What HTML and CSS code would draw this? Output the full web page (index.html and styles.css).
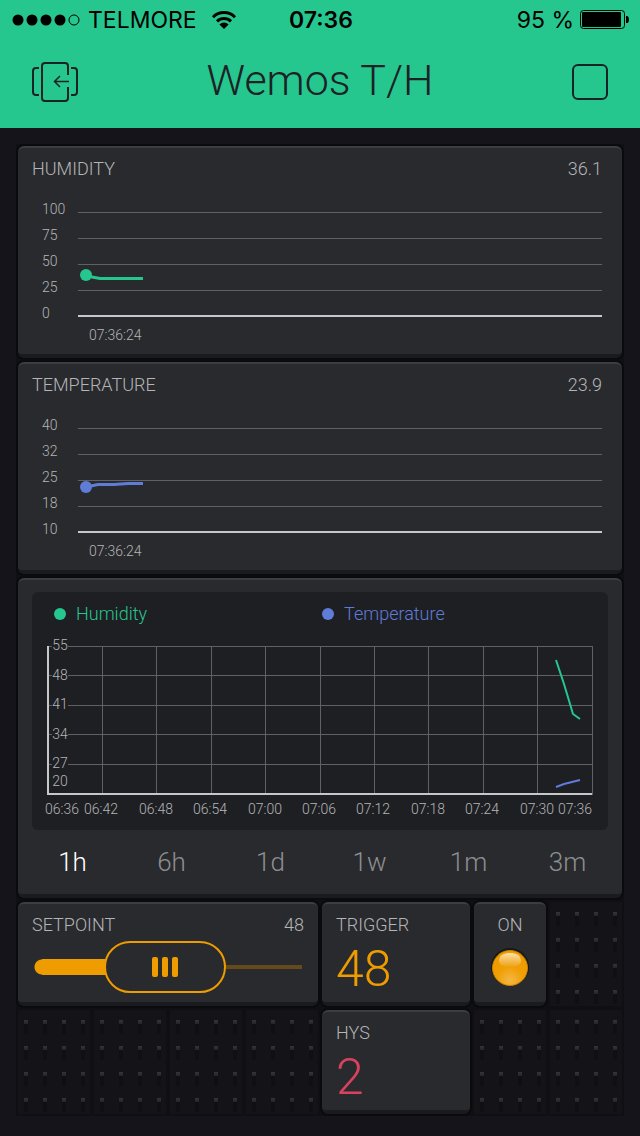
FILE: index.html
```html
<!DOCTYPE html>
<html lang="en">
<head>
    <meta charset="UTF-8">
    <meta name="viewport" content="width=device-width, initial-scale=1.0">
    <title>Wemos T/H</title>
    <link rel="stylesheet" href="styles.css">
</head>
<body>

    <header>
        <div class="status-bar">
            <div class="carrier">
                <svg class="signal" width="68" height="12" viewBox="0 0 68 12" aria-hidden="true">
                    <circle cx="6" cy="6" r="5.5"/>
                    <circle cx="20" cy="6" r="5.5"/>
                    <circle cx="34" cy="6" r="5.5"/>
                    <circle cx="48" cy="6" r="5.5"/>
                    <circle cx="62" cy="6" r="5" fill="none" stroke="#000" stroke-width="1"/>
                </svg>
                <span>TELMORE</span>
                <svg class="wifi" width="26" height="20" viewBox="0 0 26 20" aria-hidden="true">
                    <path d="M2 7.2a15.5 15.5 0 0 1 22 0M6 11.4a10 10 0 0 1 14 0" fill="none" stroke="#000" stroke-width="3"/>
                    <path d="M13 19l-4.6-4.6a6.5 6.5 0 0 1 9.2 0z"/>
                </svg>
            </div>
            <div class="clock">07:36</div>
            <div class="battery">
                <span>95 %</span>
                <svg width="50" height="20" viewBox="0 0 50 20" aria-hidden="true">
                    <rect x="0.5" y="0.5" width="44" height="18" rx="3" fill="none" stroke="#000"/>
                    <rect x="2" y="2" width="39" height="15" rx="1"/>
                    <path d="M46 6h1.5q1.5 1 1.5 3.5t-1.5 3.5H46z"/>
                </svg>
            </div>
        </div>
        <div class="title-bar">
            <button class="icon-button" aria-label="Devices">
                <svg width="46" height="40" viewBox="0 0 46 40" fill="none" stroke="#1d2225" stroke-width="2">
                    <path d="M36 13V4a3 3 0 0 0-3-3H13a3 3 0 0 0-3 3v32a3 3 0 0 0 3 3h20a3 3 0 0 0 3-3V25"/>
                    <path d="M7 6H4a3 3 0 0 0-3 3v21a3 3 0 0 0 3 3h3M39 6h3a3 3 0 0 1 3 3v21a3 3 0 0 1-3 3h-3"/>
                    <path d="M37 19.500H23M28 14l-5.500 5.500L28 25" stroke-width="1.500"/>
                </svg>
            </button>
            <h1>Wemos T/H</h1>
            <button class="icon-button" aria-label="Stop">
                <svg width="36" height="36" viewBox="0 0 36 36" fill="none" stroke="#1d2225" stroke-width="2">
                    <rect x="1" y="1" width="34" height="34" rx="5"/>
                </svg>
            </button>
        </div>
    </header>

    <main class="board">
        <section class="widget graph">
            <div class="widget-head"><h2>Humidity</h2><span>36.1</span></div>
            <div class="chart">
                <div class="scale"><span>100</span><span>75</span><span>50</span><span>25</span><span>0</span></div>
                <svg class="plot" viewBox="0 0 524 130" aria-hidden="true">
                    <path class="grid-line" d="M0 16.500H524M0 42.500H524M0 68.500H524M0 94.500H524"/>
                    <path class="axis" d="M0 120H524"/>
                    <path class="line green" d="M8 79L14 81L22 82.500H65"/>
                    <circle class="green-dot" cx="8" cy="79" r="6"/>
                </svg>
            </div>
            <div class="time">07:36:24</div>
        </section>

        <section class="widget graph">
            <div class="widget-head"><h2>Temperature</h2><span>23.9</span></div>
            <div class="chart">
                <div class="scale"><span>40</span><span>32</span><span>25</span><span>18</span><span>10</span></div>
                <svg class="plot" viewBox="0 0 524 130" aria-hidden="true">
                    <path class="grid-line" d="M0 16.500H524M0 42.500H524M0 68.500H524M0 94.500H524"/>
                    <path class="axis" d="M0 120H524"/>
                    <path class="line blue" d="M8 75L20 72.500H36L50 71.500H65"/>
                    <circle class="blue-dot" cx="8" cy="75" r="6"/>
                </svg>
            </div>
            <div class="time">07:36:24</div>
        </section>

        <section class="widget history">
            <div class="history-chart">
                <div class="legend">
                    <span class="legend-green">Humidity</span>
                    <span class="legend-blue">Temperature</span>
                </div>
                <svg viewBox="0 0 576 204">
                    <path class="grid-line" d="M16 20.500h4M36 20.500H561M16 49.500h4M36 49.500H561M16 79.500h4M36 79.500H561M16 108.500h4M36 108.500H561M16 138.500h4M36 138.500H561"/>
                    <path class="grid-line" d="M70.500 20V168M124.500 20V168M179.500 20V168M233.500 20V168M288.500 20V168M342.500 20V168M396.500 20V168M451.500 20V168M505.500 20V168M560.500 20V169"/>
                    <path class="axis" d="M16 20V168H560"/>
                    <path class="trend green" d="M524 34L532 58L541 88L548 93"/>
                    <path class="trend blue" d="M524 161L532 158L548 154"/>
                    <g class="y-labels">
                        <text x="28" y="24">55</text>
                        <text x="28" y="54">48</text>
                        <text x="28" y="83">41</text>
                        <text x="28" y="113">34</text>
                        <text x="28" y="142">27</text>
                        <text x="28" y="160">20</text>
                    </g>
                    <g class="x-labels">
                        <text x="30" y="188">06:36</text>
                        <text x="69" y="188">06:42</text>
                        <text x="124" y="188">06:48</text>
                        <text x="178" y="188">06:54</text>
                        <text x="233" y="188">07:00</text>
                        <text x="287" y="188">07:06</text>
                        <text x="341" y="188">07:12</text>
                        <text x="396" y="188">07:18</text>
                        <text x="450" y="188">07:24</text>
                        <text x="505" y="188">07:30</text>
                        <text x="543" y="188">07:36</text>
                    </g>
                </svg>
            </div>
            <div class="ranges">
                <button class="active">1h</button>
                <button>6h</button>
                <button>1d</button>
                <button>1w</button>
                <button>1m</button>
                <button>3m</button>
            </div>
        </section>

        <section class="widget setpoint">
            <div class="widget-head"><label for="setpoint">Setpoint</label><span>48</span></div>
            <input type="range" id="setpoint" min="0" max="100" value="48">
        </section>

        <section class="widget value">
            <div class="widget-head"><h2>Trigger</h2></div>
            <div class="number orange">48</div>
        </section>

        <section class="widget led">
            <h2>On</h2>
            <svg width="40" height="40" viewBox="0 0 40 40" aria-hidden="true">
                <defs>
                    <radialGradient id="glow" cx="50%" cy="85%" r="65%">
                        <stop offset="0" stop-color="#f5b743"/>
                        <stop offset="0.600" stop-color="#ef9f04"/>
                        <stop offset="1" stop-color="#ee9c00"/>
                    </radialGradient>
                    <linearGradient id="shine" x1="0" y1="0" x2="0" y2="1">
                        <stop offset="0" stop-color="#fbe0a8"/>
                        <stop offset="1" stop-color="#f0a010"/>
                    </linearGradient>
                </defs>
                <circle cx="20" cy="19" r="19" fill="#17181a"/>
                <circle cx="20" cy="20" r="17.500" fill="url(#glow)" stroke="#c98200"/>
                <path d="M9 13C9 7 14 5 20 5s11 2 11 8c0 4-5 6-11 6S9 17 9 13z" fill="url(#shine)"/>
            </svg>
        </section>

        <div class="slot"></div>
        <div class="slot"></div>
        <div class="slot"></div>
        <div class="slot"></div>
        <div class="slot"></div>

        <section class="widget value">
            <div class="widget-head"><h2>Hys</h2></div>
            <div class="number red">2</div>
        </section>

        <div class="slot"></div>
        <div class="slot"></div>
    </main>

</body>
</html>
```

FILE: styles.css
```css
* {
    box-sizing: border-box;
}
body {
    margin: 0;
    background-color: #15141a;
    color: #b4b5b6;
    font-family: Roboto, sans-serif;
    font-weight: 300;
}
h1, h2 {
    margin: 0;
    font-weight: 300;
}
button {
    padding: 0;
    border: none;
    background: none;
    color: inherit;
    font: inherit;
    cursor: pointer;
}
svg {
    display: block;
}

/* header */
header {
    height: 128px;
    background-color: #26c68f;
}
.status-bar {
    display: grid;
    grid-template-columns: 1fr auto 1fr;
    align-items: center;
    height: 40px;
    padding: 0 10px 0 12px;
    color: #000;
    font-family: Inter, sans-serif;
    font-size: 23px;
    font-weight: 400;
}
.carrier, .battery {
    display: flex;
    align-items: center;
    gap: 8px;
}
.carrier .wifi {
    margin-left: 6px;
}
.battery {
    justify-content: flex-end;
    gap: 6px;
}
.clock {
    font-weight: 600;
}
.title-bar {
    display: grid;
    grid-template-columns: 1fr auto 1fr;
    align-items: center;
    height: 84px;
    padding: 0 32px;
}
.title-bar h1 {
    color: #1d2225;
    font-size: 43px;
    line-height: 52px;
    padding-bottom: 4px;
}
.icon-button:last-child {
    justify-self: end;
}
.icon-button:first-child {
    justify-self: start;
}

/* widget board */
.board {
    display: grid;
    grid-template-columns: repeat(8, 1fr);
    grid-auto-rows: minmax(104px, auto);
    gap: 4px;
    margin: 16px 16px 20px;
    padding: 2px;
    background-color: #100f13;
}
.widget {
    border-top: 2px solid #3c3d40;
    border-bottom: 4px solid #1a1b1e;
    border-radius: 6px;
    background-color: #292a2e;
    box-shadow: 0 0 0 2px #0b0b0d;
    min-width: 0;
}
.widget-head {
    display: flex;
    justify-content: space-between;
    padding: 9px 14px 0;
    font-size: 18px;
    line-height: 24px;
}
.widget h2, .widget label {
    font-size: 18px;
    line-height: 24px;
    text-transform: uppercase;
}
.slot {
    background-color: #141318;
    background-image:
        linear-gradient(to right, transparent 4px, #141318 4px),
        linear-gradient(#343537, #242528 4px, #101014 4px, #101014 14px, transparent 14px);
    background-size: 19px 26px;
    background-position: 6px 10px;
}

/* live graphs */
.graph {
    grid-column: span 8;
    grid-row: span 2;
}
.graph .widget-head {
    padding-right: 20px;
}
.chart {
    display: flex;
    padding: 15px 20px 0 24px;
}
.scale {
    display: flex;
    flex-direction: column;
    justify-content: space-around;
    width: 36px;
    font-size: 14px;
    line-height: 26px;
}
.plot {
    flex: 1;
    min-width: 0;
}
.time {
    padding-left: 71px;
    font-size: 14px;
    line-height: 18px;
}
.grid-line {
    fill: none;
    stroke: #606164;
    stroke-width: 1;
}
.axis {
    fill: none;
    stroke: #c6c7c8;
    stroke-width: 2;
}
.line {
    fill: none;
    stroke-width: 3;
}
.trend {
    fill: none;
    stroke-width: 2;
}
.green {
    stroke: #26c68f;
}
.blue {
    stroke: #5f7cd8;
}
.green-dot {
    fill: #26c68f;
}
.blue-dot {
    fill: #5f7cd8;
}

/* history */
.history {
    grid-column: span 8;
    grid-row: span 3;
    padding-top: 12px;
}
.history-chart {
    margin: 0 14px;
    padding-top: 10px;
    border-radius: 6px;
    background-color: #1e1f23;
}
.history-chart text {
    fill: #b4b5b6;
    font-size: 14px;
    text-anchor: middle;
}
.legend {
    display: grid;
    grid-template-columns: 1fr 1fr;
    padding: 0 18px 0 22px;
    font-size: 18px;
    line-height: 24px;
}
.legend span {
    display: flex;
    align-items: center;
    gap: 10px;
}
.legend span::before {
    content: "";
    width: 12px;
    height: 12px;
    border-radius: 50%;
    background-color: currentColor;
}
.legend-green {
    color: #26c68f;
}
.legend-blue {
    color: #5f7cd8;
}
.ranges {
    display: grid;
    grid-template-columns: repeat(6, 1fr);
    padding: 16px 5px 0;
    color: #8d8e90;
    font-size: 26px;
    line-height: 32px;
}
.ranges .active {
    color: #fff;
}

/* setpoint slider */
.setpoint {
    grid-column: span 4;
}
.setpoint input {
    -webkit-appearance: none;
    appearance: none;
    display: block;
    width: calc(100% - 32px);
    height: 52px;
    margin: 4px 16px 0;
    background: none;
}
.setpoint input::-webkit-slider-runnable-track {
    height: 52px;
    background:
        radial-gradient(circle at 8px 26px, #ee9c00 7px, transparent 8px),
        linear-gradient(#ee9c00, #ee9c00) 8px 18px / 40% 16px no-repeat,
        linear-gradient(#664a1b, #664a1b) 100% 24px / 50% 4px no-repeat;
}
.setpoint input::-webkit-slider-thumb {
    -webkit-appearance: none;
    width: 122px;
    height: 52px;
    border: 2px solid #ee9c00;
    border-radius: 26px;
    background: #292a2e url("data:image/svg+xml,%3Csvg xmlns='http://www.w3.org/2000/svg' width='26' height='20' fill='%23ee9c00'%3E%3Crect width='6' height='20' rx='2'/%3E%3Crect x='10' width='6' height='20' rx='2'/%3E%3Crect x='20' width='6' height='20' rx='2'/%3E%3C/svg%3E") center no-repeat;
}

/* value displays */
.value {
    grid-column: span 2;
}
.number {
    padding: 0 14px;
    font-size: 50px;
    line-height: 64px;
}
.orange {
    color: #ee9c00;
}
.red {
    color: #d8425f;
}

/* led */
.led {
    display: flex;
    flex-direction: column;
    align-items: center;
    gap: 11px;
    padding-top: 9px;
}
```
